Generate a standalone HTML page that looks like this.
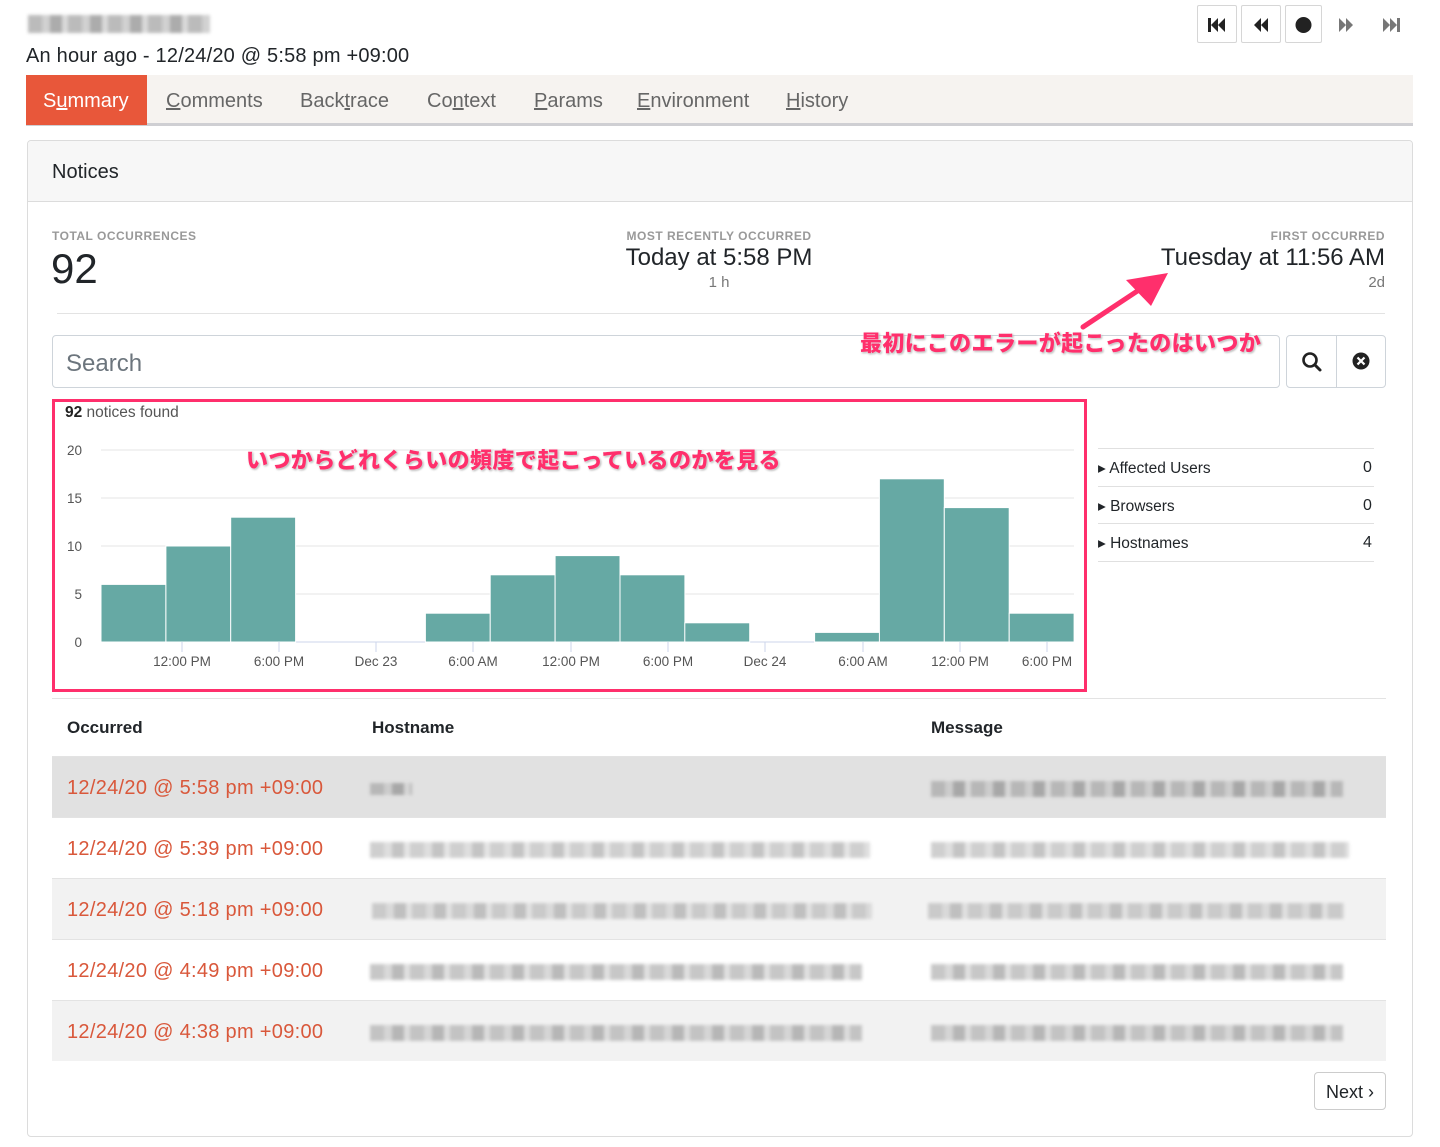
<!DOCTYPE html>
<html><head><meta charset="utf-8">
<style>
*{box-sizing:border-box;margin:0;padding:0}
body{width:1440px;height:1147px;background:#fff;font-family:"Liberation Sans","Noto Sans CJK JP",sans-serif;color:#212529;position:relative;overflow:hidden}
.a{position:absolute}
.blur{position:absolute;background:repeating-linear-gradient(90deg,#b0b0b0 0 14px,#c9c9c9 14px 22px,#9e9e9e 22px 34px,#d4d4d4 34px 40px);filter:blur(1.5px);opacity:.85}
.tab{position:absolute;top:76px;height:51px;line-height:51px;font-size:20px;color:#666}
.jp{font-family:"Noto Sans CJK JP",sans-serif;font-weight:900;color:#ff2f6c;font-size:22px;text-shadow:0 0 2px #fff,1px 1px 2px #999}
.row{position:absolute;left:52px;width:1334px;height:61px;border-top:1px solid #e3e3e3}
.row .d{position:absolute;left:15px;top:20px;font-size:20px;color:#d9583b;letter-spacing:.3px}
.btn{position:absolute;top:5px;width:40px;height:38px;border:1px solid #d6d6d6;border-radius:2px}
</style></head><body>
<div class="blur" style="left:28px;top:15px;width:182px;height:18px"></div>
<div class="a" style="left:26px;top:45px;font-size:20px;letter-spacing:.2px">An hour ago - 12/24/20 @ 5:58 pm +09:00</div>

<div class="btn" style="left:1197px"></div>
<div class="btn" style="left:1241px"></div>
<div class="btn" style="left:1285px;width:37px"></div>
<svg class="a" style="left:1180px;top:0" width="260" height="50">
<rect x="28" y="18" width="3" height="14" fill="#222"/><path d="M31 25l7-7v14zM38 25l7-7v14z" fill="#222"/>
<path d="M74 25l7-7v14zM81 25l7-7v14z" fill="#222"/>
<circle cx="123.5" cy="25" r="8" fill="#222"/>
<path d="M159 18l7 7-7 7zM166 18l7 7-7 7z" fill="#777"/>
<path d="M203 18l7 7-7 7zM210 18l7 7-7 7z" fill="#777"/><rect x="217" y="18" width="3" height="14" fill="#777"/>
</svg>

<div class="a" style="left:26px;top:75px;width:1387px;height:51px;background:#f6f3f0;border-bottom:3px solid #cfcfd3"></div>
<div class="a" style="left:26px;top:75px;width:121px;height:50px;background:#e8573a"></div>
<div class="tab" style="left:43px;color:#fff">S<u>u</u>mmary</div>
<div class="tab" style="left:166px"><u>C</u>omments</div>
<div class="tab" style="left:300px">Back<u>t</u>race</div>
<div class="tab" style="left:427px">Co<u>n</u>text</div>
<div class="tab" style="left:534px"><u>P</u>arams</div>
<div class="tab" style="left:637px"><u>E</u>nvironment</div>
<div class="tab" style="left:786px"><u>H</u>istory</div>

<div class="a" style="left:27px;top:140px;width:1386px;height:997px;border:1px solid #dcdcdc;border-radius:4px"></div>
<div class="a" style="left:28px;top:141px;width:1384px;height:61px;background:#f7f7f7;border-bottom:1px solid #dcdcdc;border-radius:4px 4px 0 0"></div>
<div class="a" style="left:52px;top:161px;font-size:20px">Notices</div>

<div class="a" style="left:52px;top:229px;font-size:12px;font-weight:bold;color:#999;letter-spacing:.5px">TOTAL OCCURRENCES</div>
<div class="a" style="left:51px;top:245px;font-size:42px">92</div>
<div class="a" style="left:560px;width:318px;text-align:center;top:229px;font-size:12px;font-weight:bold;color:#999;letter-spacing:.5px">MOST RECENTLY OCCURRED</div>
<div class="a" style="left:560px;width:318px;text-align:center;top:244px;font-size:24px">Today at 5:58 PM</div>
<div class="a" style="left:560px;width:318px;text-align:center;top:274px;font-size:15px;color:#777">1 h</div>
<div class="a" style="right:55px;top:229px;font-size:12px;font-weight:bold;color:#999;letter-spacing:.5px">FIRST OCCURRED</div>
<div class="a" style="right:55px;top:244px;font-size:24px">Tuesday at 11:56 AM</div>
<div class="a" style="right:55px;top:274px;font-size:15px;color:#777">2d</div>
<div class="a" style="left:57px;top:313px;width:1328px;height:1px;background:#e3e3e3"></div>

<div class="a" style="left:52px;top:335px;width:1228px;height:53px;border:1px solid #ced4da;border-radius:4px"></div>
<div class="a" style="left:66px;top:350px;font-size:24px;color:#6c757d">Search</div>
<div class="a" style="left:1286px;top:335px;width:100px;height:53px;border:1px solid #ced4da;border-radius:4px"></div>
<div class="a" style="left:1336px;top:335px;width:1px;height:53px;background:#ced4da"></div>
<svg class="a" style="left:1286px;top:335px" width="100" height="53">
<circle cx="24" cy="25" r="6.5" fill="none" stroke="#222" stroke-width="2.6"/><path d="M29 30l5 5" stroke="#222" stroke-width="3" stroke-linecap="round"/>
<circle cx="75" cy="26" r="8.5" fill="#222"/><path d="M71.5 22.5l7 7M78.5 22.5l-7 7" stroke="#fff" stroke-width="2.2"/>
</svg>

<div class="a" style="left:1098px;top:448px;width:276px;height:1px;background:#e0e0e0"></div>
<div class="a" style="left:1098px;top:486px;width:276px;height:1px;background:#e0e0e0"></div>
<div class="a" style="left:1098px;top:523px;width:276px;height:1px;background:#e0e0e0"></div>
<div class="a" style="left:1098px;top:561px;width:276px;height:1px;background:#e0e0e0"></div>
<div class="a" style="left:1098px;top:459px;font-size:15.5px">▸ Affected Users</div><div class="a" style="left:1363px;top:459px;font-size:16px">0</div>
<div class="a" style="left:1098px;top:497px;font-size:15.5px">▸ Browsers</div><div class="a" style="left:1363px;top:497px;font-size:16px">0</div>
<div class="a" style="left:1098px;top:534px;font-size:15.5px">▸ Hostnames</div><div class="a" style="left:1363px;top:534px;font-size:16px">4</div>

<svg class="a" style="left:0;top:0" width="1440" height="1147">
<g stroke="#e6e6e6" stroke-width="1">
<line x1="101" y1="450" x2="1074" y2="450"/><line x1="101" y1="498" x2="1074" y2="498"/>
<line x1="101" y1="546" x2="1074" y2="546"/><line x1="101" y1="594" x2="1074" y2="594"/></g>
<line x1="101" y1="642" x2="1074" y2="642" stroke="#ccd6eb"/>
<g fill="#66a9a4" stroke="#fff" stroke-width="1">
<rect x="101" y="584.4" width="64.9" height="57.6"/><rect x="165.9" y="546" width="64.9" height="96"/>
<rect x="230.7" y="517.2" width="64.9" height="124.8"/><rect x="425.4" y="613.2" width="64.9" height="28.8"/>
<rect x="490.2" y="574.8" width="64.9" height="67.2"/><rect x="555.1" y="555.6" width="64.9" height="86.4"/>
<rect x="620" y="574.8" width="64.9" height="67.2"/><rect x="684.8" y="622.8" width="64.9" height="19.2"/>
<rect x="814.6" y="632.4" width="64.9" height="9.6"/><rect x="879.4" y="478.8" width="64.9" height="163.2"/>
<rect x="944.3" y="507.6" width="64.9" height="134.4"/><rect x="1009.2" y="613.2" width="64.9" height="28.8"/></g>
<g stroke="#ccd6eb"><line x1="182" y1="642" x2="182" y2="652"/><line x1="279" y1="642" x2="279" y2="652"/><line x1="376" y1="642" x2="376" y2="652"/><line x1="473" y1="642" x2="473" y2="652"/><line x1="571" y1="642" x2="571" y2="652"/><line x1="668" y1="642" x2="668" y2="652"/><line x1="765" y1="642" x2="765" y2="652"/><line x1="863" y1="642" x2="863" y2="652"/><line x1="960" y1="642" x2="960" y2="652"/><line x1="1047" y1="642" x2="1047" y2="652"/></g>
<g font-family="Liberation Sans,sans-serif" font-size="13.5" fill="#555" text-anchor="end">
<text x="82" y="455">20</text><text x="82" y="503">15</text><text x="82" y="551">10</text><text x="82" y="599">5</text><text x="82" y="647">0</text></g>
<g font-family="Liberation Sans,sans-serif" font-size="13.5" fill="#555" text-anchor="middle">
<text x="182" y="666">12:00 PM</text><text x="279" y="666">6:00 PM</text><text x="376" y="666">Dec 23</text><text x="473" y="666">6:00 AM</text><text x="571" y="666">12:00 PM</text><text x="668" y="666">6:00 PM</text><text x="765" y="666">Dec 24</text><text x="863" y="666">6:00 AM</text><text x="960" y="666">12:00 PM</text><text x="1047" y="666">6:00 PM</text></g>
<rect x="53.5" y="400.5" width="1032" height="290" fill="none" stroke="#ff2f6c" stroke-width="3"/>
<path d="M1083 327L1145 286" stroke="#ff2f6c" stroke-width="5" stroke-linecap="round"/>
<path d="M1168 273L1126 280L1151 306Z" fill="#ff2f6c"/>
</svg>
<div class="a" style="left:65px;top:404px;font-size:15.5px;color:#555"><b style="color:#222">92</b> notices found</div>
<div class="a jp" style="left:246px;top:443px;letter-spacing:.4px">いつからどれくらいの頻度で起こっているのかを見る</div>
<div class="a jp" style="left:860px;top:326px;letter-spacing:.4px">最初にこのエラーが起こったのはいつか</div>

<div class="a" style="left:52px;top:698px;width:1334px;height:1px;background:#e3e3e3"></div>
<div class="a" style="left:67px;top:718px;font-size:17px;font-weight:bold">Occurred</div>
<div class="a" style="left:372px;top:718px;font-size:17px;font-weight:bold">Hostname</div>
<div class="a" style="left:931px;top:718px;font-size:17px;font-weight:bold">Message</div>

<div class="row" style="top:756px;background:#e1e1e1"><div class="d">12/24/20 @ 5:58 pm +09:00</div><div class="blur" style="left:318px;top:26px;width:42px;height:12px"></div><div class="blur" style="left:879px;top:24px;width:412px;height:16px"></div></div>
<div class="row" style="top:817px;background:#fff"><div class="d">12/24/20 @ 5:39 pm +09:00</div><div class="blur" style="left:318px;top:24px;width:500px;height:16px;opacity:.6"></div><div class="blur" style="left:879px;top:24px;width:418px;height:16px;opacity:.6"></div></div>
<div class="row" style="top:878px;background:#f2f2f2"><div class="d">12/24/20 @ 5:18 pm +09:00</div><div class="blur" style="left:320px;top:24px;width:500px;height:16px;opacity:.6"></div><div class="blur" style="left:876px;top:24px;width:416px;height:16px;opacity:.6"></div></div>
<div class="row" style="top:939px;background:#fff"><div class="d">12/24/20 @ 4:49 pm +09:00</div><div class="blur" style="left:318px;top:24px;width:492px;height:16px;opacity:.7"></div><div class="blur" style="left:879px;top:24px;width:412px;height:16px;opacity:.7"></div></div>
<div class="row" style="top:1000px;background:#f2f2f2"><div class="d">12/24/20 @ 4:38 pm +09:00</div><div class="blur" style="left:318px;top:24px;width:492px;height:16px;opacity:.7"></div><div class="blur" style="left:879px;top:24px;width:412px;height:16px;opacity:.7"></div></div>

<div class="a" style="left:1314px;top:1072px;width:72px;height:38px;border:1px solid #ccc;border-radius:4px;font-size:18px;line-height:38px;text-align:center">Next ›</div>
</body></html>
